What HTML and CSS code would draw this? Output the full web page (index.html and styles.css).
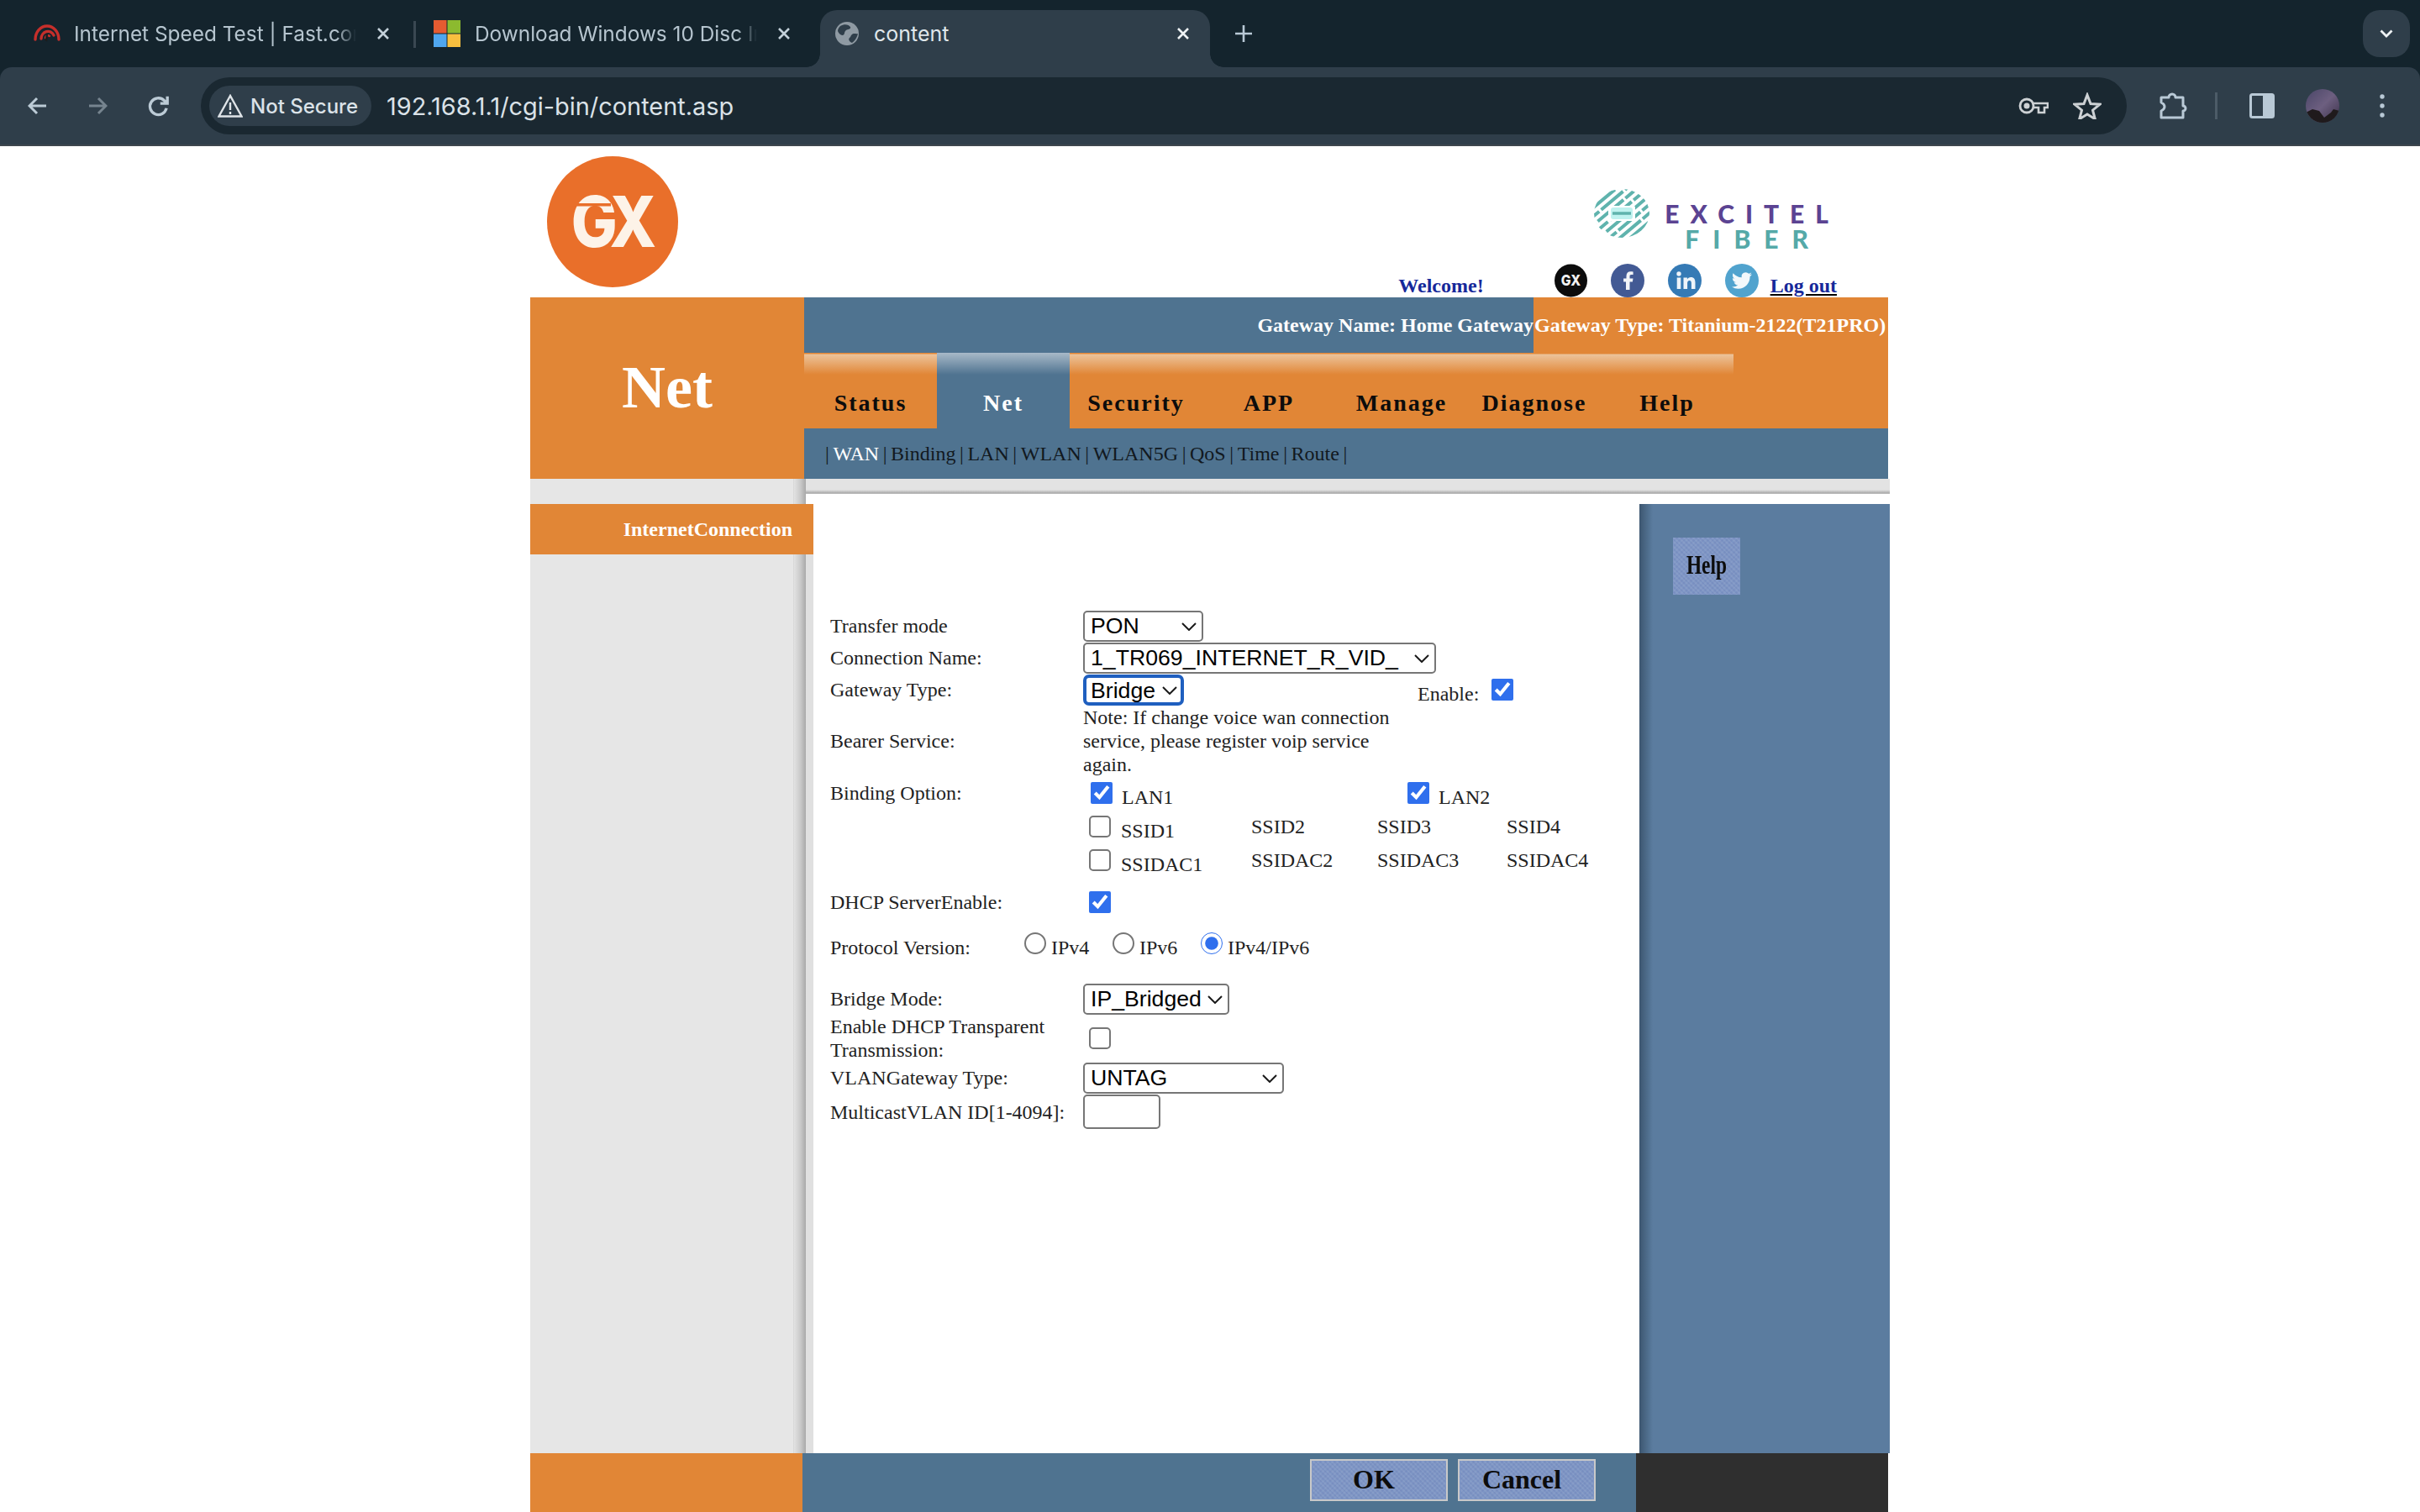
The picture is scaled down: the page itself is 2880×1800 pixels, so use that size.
FILE: index.html
```html
<!DOCTYPE html>
<html lang="en">
<head>
<meta charset="utf-8">
<title>content</title>
<link rel="stylesheet" href="styles.css">
</head>
<body>
<header class="browser">
  <div class="tabstrip">
    <div class="tab tab-one">
      <svg class="favicon" viewBox="0 0 32 32"><g fill="none" stroke="#c62f2b" stroke-width="3.4" stroke-linecap="round"><path d="M2 23a14 16 0 0 1 28 0"/><path d="M9 22a8 9 0 0 1 15-4"/><path d="M14 21a3 3 0 0 1 5-2" stroke-width="2.4"/></g><path d="M15 25l1-9" stroke="#1c1c1c" stroke-width="2.4"/></svg>
      <span class="tab-title">Internet Speed Test | Fast.com</span>
      <svg class="close" viewBox="0 0 16 16"><path d="M2 2l12 12M14 2L2 14"/></svg>
      <i class="tab-sep"></i>
    </div>
    <div class="tab tab-two">
      <svg class="favicon" viewBox="0 0 32 32"><rect width="15.5" height="15.5" fill="#e55b31"/><rect x="16.5" width="15.5" height="15.5" fill="#8cba2f"/><rect y="16.5" width="15.5" height="15.5" fill="#4fa6ef"/><rect x="16.5" y="16.5" width="15.5" height="15.5" fill="#f8bf3f"/></svg>
      <span class="tab-title">Download Windows 10 Disc Image</span>
      <svg class="close" viewBox="0 0 16 16"><path d="M2 2l12 12M14 2L2 14"/></svg>
    </div>
    <div class="tab tab-active">
      <svg class="favicon globe" viewBox="0 0 28 28"><circle cx="14" cy="14" r="14" fill="#8f9aa3"/><path d="M6 5c5-3 10-2 12 1 1 3-3 3-5 4-3 2-1 5-4 6-2 0-5-2-6-5 0-2 1-4 3-6zM27 14c-2 1-5-1-7 1-2 1-1 3-3 4-2 2 0 5 3 6 3-2 6-6 7-11z" fill="#2f3e4a"/></svg>
      <span class="tab-title plain">content</span>
      <svg class="close bright" viewBox="0 0 16 16"><path d="M2 2l12 12M14 2L2 14"/></svg>
    </div>
    <svg class="newtab" viewBox="0 0 20 20"><path d="M10 0v20M0 10h20"/></svg>
    <button class="tabmenu"><svg viewBox="0 0 16 10"><path d="M1.5 1.5L8 8l6.500-6.500"/></svg></button>
  </div>
  <div class="toolbar">
    <svg class="navicon" viewBox="0 0 24 24"><path d="M22 12H3M11 3l-9 9 9 9"/></svg>
    <svg class="navicon dim" viewBox="0 0 24 24"><path d="M2 12h19M13 3l9 9-9 9"/></svg>
    <svg class="navicon reload" viewBox="0 0 24 24"><path d="M20.500 14a8.800 8.800 0 1 1-2.500-8.200L21.500 9M21.500 1.500V9H14"/></svg>
    <div class="omnibox">
      <div class="secure">
        <svg class="warn" viewBox="0 0 30 28"><path d="M15 2L1.500 26.500h27z" fill="none" stroke="#dfe4e8" stroke-width="2.400"/><path d="M15 10v9M15 21v3" stroke="#dfe4e8" stroke-width="2.400"/></svg>
        <span>Not Secure</span>
      </div>
      <span class="url">192.168.1.1/cgi-bin/content.asp</span>
      <svg class="omni-key" viewBox="0 0 36 22"><circle cx="10" cy="11" r="8" fill="none" stroke="#cdd1d4" stroke-width="2.800"/><circle cx="10" cy="11" r="3.500" fill="#cdd1d4"/><path d="M18 8h17v5h-4v6h-7v-6h-6" fill="none" stroke="#cdd1d4" stroke-width="2.600"/></svg>
      <svg class="omni-star" viewBox="0 0 34 32"><path d="M17 3l4 10.500 11 .7-8.500 7 2.800 10.500L17 26l-9.300 5.700 2.800-10.500-8.500-7 11-.7z" fill="none" stroke="#cdd1d4" stroke-width="3"/></svg>
    </div>
    <svg class="puzzle" viewBox="0 0 34 34"><path d="M3 7h9a4 4 0 0 1 8 0h9v10a3 3 0 0 1 0 6v8H3v-8q4-2 4-5t-4-5z" fill="none" stroke="#b9c9d6" stroke-width="3" stroke-linejoin="round"/></svg>
    <i class="tool-sep"></i>
    <svg class="sidepanel" viewBox="0 0 30 30"><rect x="1.500" y="1.500" width="27" height="27" rx="2" fill="none" stroke="#b9c9d6" stroke-width="3"/><rect x="16" y="2" width="12" height="26" fill="#b9c9d6"/></svg>
    <svg class="avatar" viewBox="0 0 40 40"><defs><clipPath id="av"><circle cx="20" cy="20" r="20"/></clipPath><linearGradient id="sky" x1="0" y1="0" x2="1" y2="1"><stop offset="0" stop-color="#4a4668"/><stop offset=".5" stop-color="#6d5f80"/><stop offset="1" stop-color="#3a3048"/></linearGradient></defs><g clip-path="url(#av)"><rect width="40" height="40" fill="url(#sky)"/><path d="M0 28l8-4 8 2 6 8 8-6 3-4 7 2v14H0z" fill="#1f1a1c"/></g></svg>
    <svg class="dots" viewBox="0 0 6 30"><circle cx="3" cy="4" r="2.700"/><circle cx="3" cy="15" r="2.700"/><circle cx="3" cy="26" r="2.700"/></svg>
  </div>
</header>

<main class="page">
  <section class="head">
    <svg class="gx-logo" viewBox="0 0 156 156"><circle cx="78" cy="78" r="78" fill="#e96f2a"/><text x="33" y="108" transform="scale(.87 1)" class="gx-mark">GX</text><rect x="26" y="56" width="50" height="3.500" fill="#e96f2a"/></svg>
    <div class="head-right">
      <div class="brand">
        <svg class="swirl" viewBox="0 0 66 58"><defs><clipPath id="swc"><ellipse cx="33" cy="29" rx="33" ry="29"/></clipPath></defs><g clip-path="url(#swc)"><g transform="rotate(-40 33 29)" fill="none" stroke="#5fb3ad" stroke-width="4"><path d="M-20 -6H90M-20 10H90M-20 26H90M-20 42H90M-20 58H90" stroke-dasharray="34 3"/><path d="M-20 2H90M-20 18H90M-20 34H90M-20 50H90M-20 66H90" stroke-dasharray="22 3 40 3"/></g></g><rect x="17" y="20" width="32" height="18" rx="2" fill="#fff"/><rect x="20" y="22" width="26" height="14" rx="3" fill="#bff2ef"/><path d="M22 29h22" stroke="#5fb3ad" stroke-width="3.500"/></svg>
        <div class="brand-text"><span class="brand-top">EXCITEL</span><span class="brand-bottom">FIBER</span></div>
      </div>
      <div class="links">
        <span class="welcome">Welcome!</span>
        <svg class="social gx" viewBox="0 0 40 40"><circle cx="20" cy="20" r="20" fill="#0c0c0c"/><text x="8" y="26" class="gx-small" textLength="24" lengthAdjust="spacingAndGlyphs">GX</text></svg>
        <svg class="social" viewBox="0 0 40 40"><circle cx="20" cy="20" r="20" fill="#435a94"/><path d="M22.500 31V21.500h3.400l.6-4h-4v-2.500c0-1.200.4-1.900 2-1.900h2.100V9.500c-.5-.1-1.700-.2-3.100-.2-3 0-5 1.800-5 5.100v3.100h-3.400v4H18V31z" fill="#f2f4f8"/></svg>
        <svg class="social" viewBox="0 0 40 40"><circle cx="20" cy="20" r="20" fill="#357ab5"/><circle cx="13" cy="12" r="2.700" fill="#eef4f9"/><path d="M10.700 16.500h4.600V30h-4.600zM18.500 16.500h4.400v1.900c.8-1.300 2.300-2.300 4.300-2.300 4 0 5.300 2.500 5.300 6.300V30h-4.600v-6.700c0-1.800-.5-3.200-2.200-3.200-1.900 0-2.600 1.400-2.600 3.200V30h-4.600z" fill="#eef4f9"/></svg>
        <svg class="social" viewBox="0 0 40 40"><circle cx="20" cy="20" r="20" fill="#51a3ce"/><g transform="translate(8 8)"><path d="M23.953 4.570a10 10 0 01-2.825.775 4.958 4.958 0 002.163-2.723c-.951.555-2.005.959-3.127 1.184a4.920 4.920 0 00-8.384 4.482C7.690 8.095 4.067 6.130 1.640 3.162a4.822 4.822 0 00-.666 2.475c0 1.710.870 3.213 2.188 4.096a4.904 4.904 0 01-2.228-.616v.060a4.923 4.923 0 003.946 4.827 4.996 4.996 0 01-2.212.085 4.936 4.936 0 004.604 3.417 9.867 9.867 0 01-6.102 2.105c-.390 0-.779-.023-1.170-.067a13.995 13.995 0 007.557 2.209c9.053 0 13.998-7.496 13.998-13.985 0-.210 0-.420-.015-.630A9.935 9.935 0 0024 4.590z" fill="#f2f8fb"/></g></svg>
        <a class="logout" href="#">Log out</a>
      </div>
    </div>
  </section>

  <section class="band">
    <div class="band-title">Net</div>
    <div class="band-main">
      <div class="gateway">
        <div class="gw-name">Gateway Name: Home Gateway</div>
        <div class="gw-type">Gateway Type: Titanium-2122(T21PRO)</div>
      </div>
      <nav class="tabs">
        <a class="mtab">Status</a>
        <a class="mtab current">Net</a>
        <a class="mtab">Security</a>
        <a class="mtab">APP</a>
        <a class="mtab">Manage</a>
        <a class="mtab">Diagnose</a>
        <a class="mtab">Help</a>
      </nav>
      <div class="subnav">
        <span>|</span><a class="on">WAN</a><span>|</span><a>Binding</a><span>|</span><a>LAN</a><span>|</span><a>WLAN</a><span>|</span><a>WLAN5G</a><span>|</span><a>QoS</a><span>|</span><a>Time</a><span>|</span><a>Route</a><span>|</span>
      </div>
    </div>
  </section>

  <section class="middle">
    <aside class="side"><div class="side-item">InternetConnection</div></aside>
    <div class="content">
      <form class="form">
        <div class="row h38"><label>Transfer mode</label><div class="val"><span class="sel w143"><select><option>PON</option></select><svg viewBox="0 0 18 10"><path d="M1 1l8 8 8-8"/></svg></span></div></div>
        <div class="row h38"><label>Connection Name:</label><div class="val"><span class="sel w420"><select><option>1_TR069_INTERNET_R_VID_</option></select><svg viewBox="0 0 18 10"><path d="M1 1l8 8 8-8"/></svg></span></div></div>
        <div class="row h38"><label>Gateway Type:</label><div class="val"><span class="sel w120"><select class="focus"><option>Bridge</option></select><svg viewBox="0 0 18 10"><path d="M1 1l8 8 8-8"/></svg></span><label class="opt enable"><span class="low">Enable:</span><input type="checkbox" checked></label></div></div>
        <div class="row h84"><label>Bearer Service:</label><div class="note">Note: If change voice wan connection service, please register voip service again.</div></div>
        <div class="row h40"><label>Binding Option:</label><div class="val">
          <label class="opt lan"><input type="checkbox" checked><span class="low">LAN1</span></label>
          <label class="opt lan two"><input type="checkbox" checked><span class="low">LAN2</span></label>
        </div></div>
        <div class="row h40"><span></span><div class="ssid">
          <label class="opt in7"><input type="checkbox"><span class="low">SSID1</span></label><span>SSID2</span><span>SSID3</span><span>SSID4</span>
        </div></div>
        <div class="row h40"><span></span><div class="ssid">
          <label class="opt in7"><input type="checkbox"><span class="low">SSIDAC1</span></label><span>SSIDAC2</span><span>SSIDAC3</span><span>SSIDAC4</span>
        </div></div>
        <div class="row h59"><label>DHCP ServerEnable:</label><div class="val in7"><input type="checkbox" checked></div></div>
        <div class="row proto"><label>Protocol Version:</label><div class="radios">
          <label class="opt"><input type="radio" name="ipv"><span>IPv4</span></label>
          <label class="opt"><input type="radio" name="ipv"><span>IPv6</span></label>
          <label class="opt"><input type="radio" name="ipv" checked><span>IPv4/IPv6</span></label>
        </div></div>
        <div class="row h38 bridge"><label>Bridge Mode:</label><div class="val"><span class="sel w174"><select><option>IP_Bridged</option></select><svg viewBox="0 0 18 10"><path d="M1 1l8 8 8-8"/></svg></span></div></div>
        <div class="row h56"><label>Enable DHCP Transparent Transmission:</label><div class="val in7"><input type="checkbox"></div></div>
        <div class="row h38"><label>VLANGateway Type:</label><div class="val"><span class="sel w239"><select><option>UNTAG</option></select><svg viewBox="0 0 18 10"><path d="M1 1l8 8 8-8"/></svg></span></div></div>
        <div class="row h43"><label>MulticastVLAN ID[1-4094]:</label><div class="val"><input class="textbox" type="text"></div></div>
      </form>
    </div>
    <aside class="help"><button type="button" class="texture help-btn"><span>Help</span></button></aside>
  </section>

  <footer class="foot">
    <div class="foot-left"></div>
    <div class="foot-main">
      <button type="button" class="texture action">OK</button>
      <button type="button" class="texture action">Cancel</button>
    </div>
    <div class="foot-right"></div>
  </footer>
</main>
</body>
</html>
```

FILE: styles.css
```css
* { box-sizing: border-box; }
html, body { margin: 0; height: 100%; overflow: hidden; background: #fff; }
body { font-family: "Liberation Serif", serif; font-size: 24px; color: #222; }

/* browser chrome */
.browser { height: 174px; background: #14242d; border-bottom: 2px solid #3d464d; font-family: Inter, "Noto Sans", sans-serif; }
.tabstrip { height: 80px; display: flex; align-items: flex-start; padding-top: 12px; }
.tab { height: 68px; display: flex; align-items: flex-start; padding-top: 12px; position: relative; }
.favicon { width: 32px; height: 32px; flex: none; }
.tab-one { width: 493px; padding-left: 40px; }
.tab-two { width: 483px; padding-left: 23px; }
.tab-one .favicon { margin-right: 16px; }
.tab-two .favicon { margin-right: 17px; }
.tab-title { font-size: 24.400px; line-height: 32px; color: #b6c5cf; white-space: nowrap; overflow: hidden; width: 336px; -webkit-mask-image: linear-gradient(to right, #000 93%, transparent 100%); mask-image: linear-gradient(to right, #000 93%, transparent 100%); }
.tab-title.plain { color: #dfe6ea; width: 360px; font-size: 25px; -webkit-mask-image: none; mask-image: none; }
.close { width: 16px; height: 16px; flex: none; margin: 8px 0 0 24px; fill: none; stroke: #c3d0d9; stroke-width: 2.600px; }
.close.bright { stroke: #eef2f4; margin-left: 0; }
.tab-sep { position: absolute; left: 492px; top: 13px; width: 3px; height: 32px; background: #3a4852; }
.tab-active { width: 464px; padding-left: 18px; background: #2f3e4a; border-radius: 20px 20px 0 0; }
.tab-active .globe { width: 28px; height: 28px; margin: 2px 18px 0 0; }
.tab-active::before, .tab-active::after { content: ""; position: absolute; bottom: 0; width: 16px; height: 16px; }
.tab-active::before { left: -16px; background: radial-gradient(circle at 0 0, transparent 15.500px, #2f3e4a 16px); }
.tab-active::after { right: -16px; background: radial-gradient(circle at 100% 0, transparent 15.500px, #2f3e4a 16px); }
.newtab { width: 20px; height: 20px; margin: 18px 0 0 30px; fill: none; stroke: #b9c9d6; stroke-width: 2.600px; flex: none; }
.tabmenu { margin-left: auto; margin-right: 12px; width: 56px; height: 56px; border: 0; padding: 0; border-radius: 20px; background: #2f3e4a; display: flex; align-items: center; justify-content: center; }
.tabmenu svg { width: 16px; height: 10px; fill: none; stroke: #eef2f4; stroke-width: 2.800px; }
.toolbar { height: 92px; background: #2f3e4a; border-radius: 14px 14px 0 0; display: flex; align-items: center; padding-left: 33px; }
.navicon { width: 24px; height: 24px; margin-right: 47px; fill: none; stroke: #bccbd6; stroke-width: 3px; flex: none; }
.navicon.dim { stroke: #76848f; margin-right: 48px; }
.navicon.reload { width: 27px; height: 27px; margin-right: -3px; margin-left: -1px; }
.omnibox { margin-left: 40px; width: 2292px; height: 68px; border-radius: 34px; background: #1a2831; display: flex; align-items: center; padding-left: 10px; flex: none; color: #dbe2e8; }
.secure { width: 193px; height: 48px; border-radius: 24px; background: #2f3e4a; display: flex; align-items: center; padding-left: 10px; gap: 9px; font-size: 24px; font-weight: 500; white-space: nowrap; flex: none; }
.warn { width: 30px; height: 28px; flex: none; }
.url { margin-left: 18px; font-size: 28.900px; white-space: nowrap; }
.omni-key { width: 36px; height: 22px; margin-left: auto; flex: none; }
.omni-star { width: 34px; height: 32px; margin: 0 30px 0 29px; flex: none; }
.puzzle { width: 34px; height: 34px; margin-left: 38px; flex: none; }
.tool-sep { width: 3px; height: 32px; background: #4c5b67; margin: 0 38px 0 33px; flex: none; }
.sidepanel { width: 30px; height: 30px; flex: none; }
.avatar { width: 40px; height: 44px; margin-left: 37px; flex: none; }
.dots { width: 6px; height: 30px; margin-left: 48px; fill: #b9c9d6; flex: none; }

/* router page */
.page { width: 1618px; height: 1626px; margin: 0 auto; display: flex; flex-direction: column; }
.head { height: 180px; display: flex; justify-content: space-between; padding-left: 20px; }
.gx-logo { width: 156px; height: 156px; margin-top: 12px; }
.gx-mark { font-family: Inter, sans-serif; font-weight: 800; font-size: 84px; letter-spacing: -9px; fill: #fdf3e8; }
.head-right { display: flex; flex-direction: column; justify-content: space-between; align-items: flex-end; padding: 51px 63px 0 0; }
.brand { display: flex; align-items: flex-start; margin-right: 10px; }
.swirl { width: 66px; height: 58px; margin-right: 18px; }
.brand-text { display: flex; flex-direction: column; align-items: center; font-family: Lato, sans-serif; font-weight: 900; font-size: 30px; line-height: 30px; }
.brand-top { color: #5b4392; letter-spacing: 13px; margin-right: -13px; white-space: nowrap; margin-top: 14px; }
.brand-bottom { color: #55a9a8; letter-spacing: 16px; margin-right: -16px; white-space: nowrap; }
.links { display: flex; align-items: flex-end; height: 40px; font-weight: 700; }
.welcome { color: #17299a; margin-right: 84px; line-height: 28px; }
.social { width: 40px; height: 40px; margin-right: 28px; flex: none; }
.social.gx { width: 39px; }
.gx-small { font-family: Inter, sans-serif; font-weight: 800; font-size: 18px; fill: #f2f2f2; }
.logout { color: #17299a; margin-left: -14px; line-height: 28px; text-decoration: underline; text-decoration-color: #000; }

.band { height: 216px; width: 1616px; display: grid; grid-template-columns: 326px 1fr; }
.band-title { background: #e18636; color: #fff; font-size: 72px; font-weight: 700; display: flex; align-items: center; justify-content: center; padding-bottom: 2px; }
.band-main { display: flex; flex-direction: column; min-width: 0; }
.gateway { height: 66px; display: grid; grid-template-columns: 868px 1fr; color: #fff; font-weight: 700; line-height: 66px; white-space: nowrap; }
.gw-name { background: #4f7390; text-align: right; }
.gw-type { background: #e18636; padding-left: 1px; }
.tabs { height: 90px; background: #e18636; display: flex; }
.mtab { width: 158px; padding-top: 42px; text-align: center; font-size: 28px; font-weight: 700; letter-spacing: 2px; line-height: 36px; color: #0c0c0c; background: linear-gradient(#e18636 0, #e18636 1px, #ecc39a 2px, #e18636 26px); }
.mtab.current { color: #fff; background: linear-gradient(#a8b9c8 0, #4f7390 26px); }
.subnav { height: 60px; background: #4f7390; display: flex; align-items: center; padding-left: 25px; gap: 4.600px; color: #12191f; }
.subnav a.on { color: #fff; }

.middle { height: 1160px; display: grid; grid-template-columns: 328px minmax(0, 1fr) 298px; grid-template-rows: 18px minmax(0, 1fr); }
.middle::before { content: ""; grid-column: 1 / -1; grid-row: 1; background: linear-gradient(#e3e3e3 0, #e3e3e3 13px, #a9a9a9 17px, #c9c9c9 18px); }
.side { grid-column: 1; grid-row: 1 / 3; padding-top: 30px; background: linear-gradient(to right, transparent 0, transparent 313px, #cfcfcf 313px, #e2e2e2 314px, #c8c8c8 322px, #a9a9a9 328px), #e6e6e6; }
.side-item { position: relative; height: 60px; margin-right: -9px; background: #e18636; color: #fff; font-weight: 700; text-align: right; line-height: 60px; padding-right: 25px; }
.content { grid-column: 2; grid-row: 2; background: #fff; padding-top: 72px; min-height: 0; min-width: 0; }
.form { height: 100%; border-left: 9px solid #e0e0e0; padding: 66px 0 0 20px; }
.row { display: grid; grid-template-columns: 301px minmax(0, 1fr); align-items: center; line-height: 28px; }
.h38 { height: 38px; } .h40 { height: 40px; } .h43 { height: 43px; }
.h56 { height: 56px; } .h59 { height: 59px; } .h84 { height: 84px; }
.proto { height: 50px; grid-template-columns: 231px minmax(0, 1fr); }
.bridge { margin-top: 17px; }
.val { display: flex; align-items: center; }
.in7 { padding-left: 7px; }
.note { width: 370px; }
.sel { position: relative; display: block; height: 37px; flex: none; }
.w143 { width: 143px; } .w420 { width: 420px; } .w120 { width: 120px; } .w174 { width: 174px; } .w239 { width: 239px; }
.sel select { appearance: none; -webkit-appearance: none; width: 100%; height: 100%; padding: 0 0 0 7px; border: 2px solid #767676; border-radius: 5px; background: #fff; color: #000; font: 26.670px "Liberation Sans", sans-serif; outline: 0; }
.sel select.focus { border: 4px solid #1f5fbf; border-radius: 7px; padding-left: 5px; }
.sel svg { position: absolute; right: 8px; top: 14px; width: 18px; height: 10px; fill: none; stroke: #1a1a1a; stroke-width: 2px; pointer-events: none; }
input[type=checkbox], input[type=radio] { width: 26px; height: 26px; margin: 0; accent-color: #2f6fed; flex: none; }
input[type=checkbox]:not(:checked), input[type=radio]:not(:checked) { appearance: none; -webkit-appearance: none; border: 2px solid #767676; background: #fff; }
input[type=checkbox]:not(:checked) { border-radius: 5px; }
input[type=radio]:not(:checked) { border-radius: 50%; }
.opt { display: inline-flex; align-items: center; white-space: nowrap; }
.low { padding-top: 10px; }
.enable { margin-left: 278px; }
.enable input { margin-left: 15px; }
.lan { width: 377px; margin-left: 9px; }
.lan input { margin-right: 11px; }
.lan.two { margin-left: 0; width: auto; }
.ssid { display: grid; grid-template-columns: 200px 150px 154px 1fr; align-items: center; white-space: nowrap; }
.ssid .opt input { margin-right: 12px; }
.radios { display: flex; }
.radios .opt { width: 105px; }
.radios input { margin: 0 6px 10px 0; }
.textbox { width: 92px; height: 41px; border: 2px solid #767676; border-radius: 5px; background: #fff; padding: 0; }
.help { grid-column: 3; grid-row: 2; margin-top: 12px; padding: 40px 0 0 40px; background: linear-gradient(to right, #3d5670 0, #4f6e8d 10px, #5b7c9f 16px); }
.texture { background-color: #7d95c4; background-image: repeating-linear-gradient(45deg, rgba(255,255,255,.07) 0 2px, transparent 2px 4px), repeating-linear-gradient(-45deg, rgba(60,60,140,.07) 0 2px, transparent 2px 4px); color: #0c0c0c; font-family: "Liberation Serif", serif; font-weight: 700; font-size: 32px; padding: 0; }
.help-btn { display: block; width: 80px; height: 68px; border: 0; padding-bottom: 3px; }
.help-btn span { display: inline-block; transform: scaleX(.73); }
.foot { height: 70px; width: 1616px; display: grid; grid-template-columns: 324px 992px 300px; }
.foot-left { background: #e18636; }
.foot-main { background: #4f7390; display: flex; justify-content: flex-end; gap: 12px; padding: 7px 48px 0 0; }
.foot-right { background: #2f2f2f; }
.action { width: 164px; height: 50px; border: 2px solid #c9c9c9; padding: 0 12px 2px 0; }
```
